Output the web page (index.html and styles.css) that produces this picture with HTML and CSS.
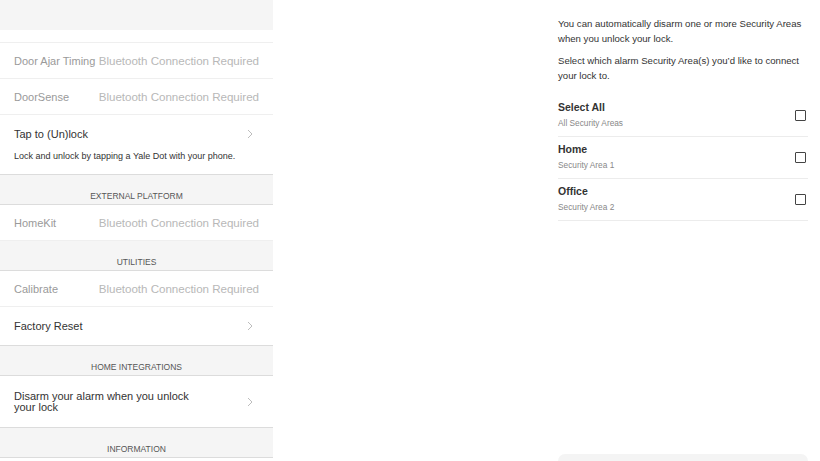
FILE: index.html
```html
<!DOCTYPE html>
<html>
<head>
<meta charset="utf-8">
<link rel="stylesheet" href="styles.css">
</head>
<body>
<div class="page">
  <div class="left">
    <div class="topbar"></div>
    <div class="list">
      <div class="row row-first"><span class="label"></span><svg class="chev" viewBox="0 0 6 10" width="6" height="10"><path d="M1 1 L5 5 L1 9" fill="none" stroke="#bdbdbd" stroke-width="1"/></svg></div>
      <div class="row"><span class="label muted">Door Ajar Timing</span><span class="value">Bluetooth Connection Required</span></div>
      <div class="row"><span class="label muted">DoorSense</span><span class="value">Bluetooth Connection Required</span></div>
      <div class="row row-desc">
        <div class="row-line"><span class="label">Tap to (Un)lock</span><svg class="chev" viewBox="0 0 6 10" width="6" height="10"><path d="M1 1 L5 5 L1 9" fill="none" stroke="#bdbdbd" stroke-width="1"/></svg></div>
        <div class="desc">Lock and unlock by tapping a Yale Dot with your phone.</div>
      </div>
      <div class="section">EXTERNAL PLATFORM</div>
      <div class="row"><span class="label muted">HomeKit</span><span class="value">Bluetooth Connection Required</span></div>
      <div class="section">UTILITIES</div>
      <div class="row"><span class="label muted">Calibrate</span><span class="value">Bluetooth Connection Required</span></div>
      <div class="row row-reset"><span class="label">Factory Reset</span><svg class="chev" viewBox="0 0 6 10" width="6" height="10"><path d="M1 1 L5 5 L1 9" fill="none" stroke="#bdbdbd" stroke-width="1"/></svg></div>
      <div class="section">HOME INTEGRATIONS</div>
      <div class="row row-tall"><span class="label wrap">Disarm your alarm when you unlock your lock</span><svg class="chev" viewBox="0 0 6 10" width="6" height="10"><path d="M1 1 L5 5 L1 9" fill="none" stroke="#bdbdbd" stroke-width="1"/></svg></div>
      <div class="section">INFORMATION</div>
    </div>
  </div>
  <div class="gap"></div>
  <div class="right">
    <p class="intro">You can automatically disarm one or more Security Areas when you unlock your lock.</p>
    <p class="intro">Select which alarm Security Area(s) you’d like to connect your lock to.</p>
    <div class="areas">
      <div class="area">
        <div class="area-text"><div class="area-name">Select All</div><div class="area-sub">All Security Areas</div></div>
        <span class="check"></span>
      </div>
      <div class="area">
        <div class="area-text"><div class="area-name">Home</div><div class="area-sub">Security Area 1</div></div>
        <span class="check"></span>
      </div>
      <div class="area">
        <div class="area-text"><div class="area-name">Office</div><div class="area-sub">Security Area 2</div></div>
        <span class="check"></span>
      </div>
    </div>
    <div class="spacer"></div>
    <div class="button"></div>
  </div>
</div>
</body>
</html>
```
FILE: styles.css
```css
html, body {
  margin: 0;
  padding: 0;
  background: #ffffff;
}
body {
  font-family: "Liberation Sans", Arial, sans-serif;
  color: #333;
}
.page {
  display: flex;
  width: 820px;
  height: 461px;
  overflow: hidden;
}
.left {
  width: 273px;
  flex: none;
  position: relative;
  overflow: hidden;
  height: 461px;
}
.topbar {
  position: absolute;
  top: 0;
  left: 0;
  right: 0;
  height: 30px;
  background: #f5f5f5;
  z-index: 2;
}
.list {
  display: flex;
  flex-direction: column;
  margin-top: 7px;
}
.row {
  display: flex;
  align-items: center;
  justify-content: space-between;
  height: 35px;
  padding: 0 14px;
  border-bottom: 1px solid #efefef;
  font-size: 11px;
  flex: none;
  white-space: nowrap;
}
.label {
  color: #333;
}
.label.muted {
  color: #9a9a9a;
}
.value {
  color: #b8b8b8;
  font-size: 11.6px;
  letter-spacing: -0.03px;
}
.chev {
  display: block;
  margin-right: 6px;
}
.row-desc {
  display: flex;
  flex-direction: column;
  align-items: stretch;
  justify-content: flex-start;
  height: 59px;
  border-bottom: 1px solid #dcdcdc;
}
.row-line {
  display: flex;
  justify-content: space-between;
  align-items: center;
  height: 37px;
}
.desc {
  font-size: 9px;
  color: #333;
  margin-top: -1px;
}
.row-reset {
  height: 38px;
  border-bottom: 1px solid #dcdcdc;
}
.row-tall {
  height: 51px;
  border-bottom: 1px solid #dcdcdc;
}
.wrap {
  width: 190px;
  line-height: 11px;
  white-space: normal;
}
.section {
  background: #f5f5f5;
  height: 30px;
  box-sizing: border-box;
  padding-top: 16px;
  text-align: center;
  font-size: 8.5px;
  color: #555;
  border-bottom: 1px solid #dcdcdc;
  line-height: 10px;
  flex: none;
}
.gap {
  flex: none;
  width: 285px;
}
.right {
  width: 250px;
  flex: none;
  display: flex;
  flex-direction: column;
  padding-top: 16px;
  height: 461px;
  box-sizing: border-box;
}
.intro {
  margin: 0 0 7px 0;
  font-size: 9.6px;
  line-height: 15px;
  color: #333;
}
.areas {
  margin-top: 5px;
  display: flex;
  flex-direction: column;
}
.area {
  display: flex;
  align-items: center;
  justify-content: space-between;
  height: 41px;
  border-bottom: 1px solid #ececec;
  padding-right: 2px;
}
.area-text {
  margin-top: -3px;
}
.area-name {
  font-size: 10.5px;
  font-weight: bold;
  color: #333;
  line-height: 14px;
}
.area-sub {
  font-size: 8.3px;
  color: #888;
  line-height: 12px;
  margin-top: 3px;
}
.check {
  width: 9px;
  height: 9px;
  border: 1.6px solid #444;
  border-radius: 1px;
}
.spacer {
  flex: 1;
}
.button {
  height: 7px;
  background: #f4f4f4;
  border-radius: 7px 7px 0 0;
}
```
